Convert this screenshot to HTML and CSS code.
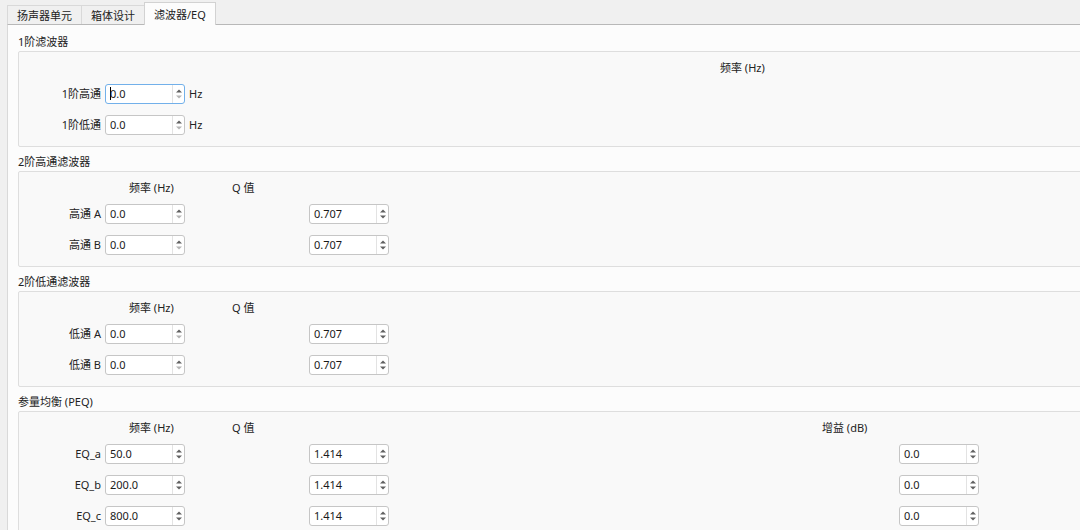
FILE: index.html
```html
<!DOCTYPE html>
<html lang="zh">
<head>
<meta charset="utf-8">
<title>滤波器/EQ</title>
<link rel="stylesheet" href="styles.css">
</head>
<body>
<div class="window">
  <div class="tabbar">
    <div class="tab">扬声器单元</div>
    <div class="tab">箱体设计</div>
    <div class="tab active">滤波器/EQ</div>
  </div>
  <div class="pane">
    <section class="group">
      <div class="group-title">1阶滤波器</div>
      <div class="box">
        <div class="hdr-row">
          <div class="hdr h-far">频率 (Hz)</div>
        </div>
        <div class="lbl">1阶高通</div>
        <div class="spin focus"><span class="val"><span class="caret"></span>0.0</span><span class="arrows"><svg width="10" height="18" viewBox="0 0 10 18"><polygon points="2,7.5 5,4.5 8,7.5" class="up"/><polygon points="2,10.5 5,13.5 8,10.5" class="dn off"/></svg></span></div>
        <div class="unit">Hz</div>
        <div class="lbl">1阶低通</div>
        <div class="spin"><span class="val">0.0</span><span class="arrows"><svg width="10" height="18" viewBox="0 0 10 18"><polygon points="2,7.5 5,4.5 8,7.5" class="up"/><polygon points="2,10.5 5,13.5 8,10.5" class="dn off"/></svg></span></div>
        <div class="unit">Hz</div>
      </div>
    </section>

    <section class="group">
      <div class="group-title">2阶高通滤波器</div>
      <div class="box">
        <div class="hdr-row">
          <div class="hdr h-freq">频率 (Hz)</div>
          <div class="hdr h-q">Q 值</div>
        </div>
        <div class="lbl">高通 A</div>
        <div class="spin"><span class="val">0.0</span><span class="arrows"><svg width="10" height="18" viewBox="0 0 10 18"><polygon points="2,7.5 5,4.5 8,7.5" class="up"/><polygon points="2,10.5 5,13.5 8,10.5" class="dn off"/></svg></span></div>
        <div class="spin c-q"><span class="val">0.707</span><span class="arrows"><svg width="10" height="18" viewBox="0 0 10 18"><polygon points="2,7.5 5,4.5 8,7.5" class="up"/><polygon points="2,10.5 5,13.5 8,10.5" class="dn"/></svg></span></div>
        <div class="lbl">高通 B</div>
        <div class="spin"><span class="val">0.0</span><span class="arrows"><svg width="10" height="18" viewBox="0 0 10 18"><polygon points="2,7.5 5,4.5 8,7.5" class="up"/><polygon points="2,10.5 5,13.5 8,10.5" class="dn off"/></svg></span></div>
        <div class="spin c-q"><span class="val">0.707</span><span class="arrows"><svg width="10" height="18" viewBox="0 0 10 18"><polygon points="2,7.5 5,4.5 8,7.5" class="up"/><polygon points="2,10.5 5,13.5 8,10.5" class="dn"/></svg></span></div>
      </div>
    </section>

    <section class="group">
      <div class="group-title">2阶低通滤波器</div>
      <div class="box">
        <div class="hdr-row">
          <div class="hdr h-freq">频率 (Hz)</div>
          <div class="hdr h-q">Q 值</div>
        </div>
        <div class="lbl">低通 A</div>
        <div class="spin"><span class="val">0.0</span><span class="arrows"><svg width="10" height="18" viewBox="0 0 10 18"><polygon points="2,7.5 5,4.5 8,7.5" class="up"/><polygon points="2,10.5 5,13.5 8,10.5" class="dn off"/></svg></span></div>
        <div class="spin c-q"><span class="val">0.707</span><span class="arrows"><svg width="10" height="18" viewBox="0 0 10 18"><polygon points="2,7.5 5,4.5 8,7.5" class="up"/><polygon points="2,10.5 5,13.5 8,10.5" class="dn"/></svg></span></div>
        <div class="lbl">低通 B</div>
        <div class="spin"><span class="val">0.0</span><span class="arrows"><svg width="10" height="18" viewBox="0 0 10 18"><polygon points="2,7.5 5,4.5 8,7.5" class="up"/><polygon points="2,10.5 5,13.5 8,10.5" class="dn off"/></svg></span></div>
        <div class="spin c-q"><span class="val">0.707</span><span class="arrows"><svg width="10" height="18" viewBox="0 0 10 18"><polygon points="2,7.5 5,4.5 8,7.5" class="up"/><polygon points="2,10.5 5,13.5 8,10.5" class="dn"/></svg></span></div>
      </div>
    </section>

    <section class="group">
      <div class="group-title">参量均衡 (PEQ)</div>
      <div class="box">
        <div class="hdr-row">
          <div class="hdr h-freq">频率 (Hz)</div>
          <div class="hdr h-q">Q 值</div>
          <div class="hdr h-gain">增益 (dB)</div>
        </div>
        <div class="lbl">EQ_a</div>
        <div class="spin"><span class="val">50.0</span><span class="arrows"><svg width="10" height="18" viewBox="0 0 10 18"><polygon points="2,7.5 5,4.5 8,7.5" class="up"/><polygon points="2,10.5 5,13.5 8,10.5" class="dn"/></svg></span></div>
        <div class="spin c-q"><span class="val">1.414</span><span class="arrows"><svg width="10" height="18" viewBox="0 0 10 18"><polygon points="2,7.5 5,4.5 8,7.5" class="up"/><polygon points="2,10.5 5,13.5 8,10.5" class="dn"/></svg></span></div>
        <div class="spin c-gain"><span class="val">0.0</span><span class="arrows"><svg width="10" height="18" viewBox="0 0 10 18"><polygon points="2,7.5 5,4.5 8,7.5" class="up"/><polygon points="2,10.5 5,13.5 8,10.5" class="dn"/></svg></span></div>
        <div class="lbl">EQ_b</div>
        <div class="spin"><span class="val">200.0</span><span class="arrows"><svg width="10" height="18" viewBox="0 0 10 18"><polygon points="2,7.5 5,4.5 8,7.5" class="up"/><polygon points="2,10.5 5,13.5 8,10.5" class="dn"/></svg></span></div>
        <div class="spin c-q"><span class="val">1.414</span><span class="arrows"><svg width="10" height="18" viewBox="0 0 10 18"><polygon points="2,7.5 5,4.5 8,7.5" class="up"/><polygon points="2,10.5 5,13.5 8,10.5" class="dn"/></svg></span></div>
        <div class="spin c-gain"><span class="val">0.0</span><span class="arrows"><svg width="10" height="18" viewBox="0 0 10 18"><polygon points="2,7.5 5,4.5 8,7.5" class="up"/><polygon points="2,10.5 5,13.5 8,10.5" class="dn"/></svg></span></div>
        <div class="lbl">EQ_c</div>
        <div class="spin"><span class="val">800.0</span><span class="arrows"><svg width="10" height="18" viewBox="0 0 10 18"><polygon points="2,7.5 5,4.5 8,7.5" class="up"/><polygon points="2,10.5 5,13.5 8,10.5" class="dn"/></svg></span></div>
        <div class="spin c-q"><span class="val">1.414</span><span class="arrows"><svg width="10" height="18" viewBox="0 0 10 18"><polygon points="2,7.5 5,4.5 8,7.5" class="up"/><polygon points="2,10.5 5,13.5 8,10.5" class="dn"/></svg></span></div>
        <div class="spin c-gain"><span class="val">0.0</span><span class="arrows"><svg width="10" height="18" viewBox="0 0 10 18"><polygon points="2,7.5 5,4.5 8,7.5" class="up"/><polygon points="2,10.5 5,13.5 8,10.5" class="dn"/></svg></span></div>
      </div>
    </section>
  </div>
</div>
</body>
</html>
```

FILE: styles.css
```css
html, body {
  margin: 0;
  padding: 0;
}
body {
  width: 1080px;
  height: 530px;
  overflow: hidden;
  background: #f0f0f0;
  font-family: "Noto Sans", "Noto Sans CJK SC", sans-serif;
  font-size: 11px;
  color: #222;
}
.window {
  width: 1240px;
  height: 530px;
  --cols: 86px 80px 124px 80px 510px 80px 1fr;
}
.tabbar {
  display: flex;
  align-items: flex-end;
  height: 24px;
  padding-left: 7px;
  box-sizing: border-box;
  position: relative;
  z-index: 1;
}
.tab {
  height: 19px;
  line-height: 19px;
  padding: 0 9px;
  border: 1px solid #d9d9d9;
  border-bottom: none;
  background: #f0f0f0;
  box-sizing: border-box;
  margin-right: -1px;
  white-space: nowrap;
}
.tab.active {
  height: 23px;
  padding-top: 2px;
  line-height: 20px;
  background: #fcfcfc;
  border-color: #d2d2d2;
  margin-bottom: -1px;
  position: relative;
}
.pane {
  margin-left: 7px;
  border-top: 1px solid #b8b8b8;
  border-left: 1px solid #d9d9d9;
  background: #fcfcfc;
  padding: 9px 0 0 10px;
  height: 520px;
  box-sizing: border-box;
}
.group {
  margin-bottom: 7px;
}
.group-title {
  height: 17px;
  line-height: 16px;
  white-space: nowrap;
}
.box {
  border: 1px solid #dedede;
  border-radius: 2px;
  background: #f9f9f9;
  padding-top: 8px;
  display: grid;
  grid-template-columns: var(--cols);
  grid-template-rows: 24px;
  grid-auto-rows: 31px;
  align-items: start;
}
.hdr-row {
  grid-column: 1 / -1;
  grid-row: 1;
  display: grid;
  grid-template-columns: var(--cols);
}
.hdr {
  line-height: 16px;
  white-space: nowrap;
}
.h-far { grid-column: 5; padding-left: 331px; }
.h-freq { grid-column: 2; padding-left: 24px; }
.h-q { grid-column: 3; padding-left: 47px; }
.h-gain { grid-column: 5; padding-left: 433px; }
.lbl {
  grid-column: 1;
  justify-self: end;
  padding-right: 4px;
  line-height: 20px;
  white-space: nowrap;
}
.unit {
  grid-column: 3;
  padding-left: 4px;
  line-height: 20px;
}
.spin {
  grid-column: 2;
  width: 80px;
  height: 20px;
  box-sizing: border-box;
  border: 1px solid #c6c6c6;
  border-radius: 3px;
  background: #fff;
  display: flex;
}
.spin.c-q { grid-column: 4; }
.spin.c-gain { grid-column: 6; }
.spin.focus {
  border-color: #72b0ea;
}
.val {
  flex: 1;
  padding-left: 4px;
  line-height: 18px;
  white-space: nowrap;
  color: #1a1a1a;
}
.caret {
  display: inline-block;
  width: 1px;
  height: 13px;
  background: #000;
  vertical-align: -2px;
  margin-right: -1px;
}
.arrows {
  width: 11px;
  border-left: 1px solid #e3e3e3;
  display: flex;
  align-items: center;
  justify-content: center;
}
.arrows svg {
  display: block;
}
.up, .dn {
  fill: #606060;
}
.dn.off {
  fill: #b4b4b4;
}
```
